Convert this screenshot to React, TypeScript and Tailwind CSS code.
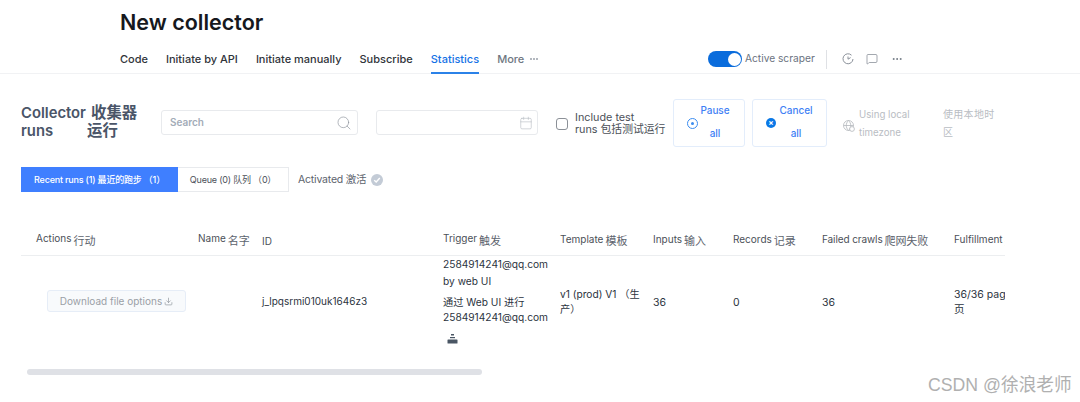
import { MessageSquare, MoreHorizontal, Search, Calendar, Download } from "lucide-react";

const cols = "grid grid-cols-[177px_64px_181px_117px_93px_80px_89px_132px_51px]";
const zh = "relative top-[3px] ml-[2px] text-[11px] text-[#5c636d]";
const zh2 = "relative top-[2px] ml-[2px] text-[11px] text-[#5c636d]";

function Tab({ children, active, muted }: { children: React.ReactNode; active?: boolean; muted?: boolean }) {
  return (
    <div className={`h-[31px] pt-[7px] border-b-2 text-[11px] leading-[18px] font-medium ${active ? "border-[#2b82e8] text-[#1672e6]" : "border-transparent"} ${muted ? "text-[#6f7782]" : active ? "" : "text-[#30343a]"}`}>
      {children}
    </div>
  );
}

export default function App() {
  return (
    <div className="relative w-[1080px] h-[402px] overflow-hidden bg-white font-['Inter','Noto_Sans_CJK_SC',sans-serif] text-[#242a33]">
      <header className="h-[74px] border-b border-[#f1f2f4] pl-[120px] pr-[177px]">
        <h1 className="pt-[8px] h-[43px] text-[21.5px] leading-[28px] font-semibold text-[#16181d]">New collector</h1>
        <div className="flex items-start">
          <nav className="flex gap-[18px]">
            <Tab>Code</Tab>
            <Tab>Initiate by API</Tab>
            <Tab>Initiate manually</Tab>
            <Tab>Subscribe</Tab>
            <Tab active>Statistics</Tab>
            <div className="flex">
              <Tab muted>More</Tab>
              <span className="ml-[6px] mt-[15px] flex gap-[1px]">
                <i className="w-[2px] h-[2px] rounded-full bg-[#9aa1aa]" />
                <i className="w-[2px] h-[2px] rounded-full bg-[#9aa1aa]" />
                <i className="w-[2px] h-[2px] rounded-full bg-[#9aa1aa]" />
              </span>
            </div>
          </nav>
          <div className="ml-auto flex items-center h-[20px] mt-[6px]">
            <div className="w-[34px] h-[16px] rounded-full bg-[#0a6cdc] flex justify-end items-center pr-[1px]">
              <div className="w-[13px] h-[13px] rounded-full bg-white" />
            </div>
            <span className="ml-[3px] w-[69px] whitespace-nowrap text-[10.2px] text-[#6b7280]">Active scraper</span>
            <div className="ml-[12px] w-px h-[19px] bg-[#dfe1e5]" />
            <svg className="ml-[15px]" width="12" height="12" viewBox="0 0 12 12" fill="none" stroke="#8a9099" strokeWidth="1">
              <path d="M9.5 2.2A5 5 0 1 0 11 6" />
              <path d="M6 3.5V6.2L8.6 4.6" />
            </svg>
            <MessageSquare className="ml-[12px] text-[#7b828c]" size={12} strokeWidth={1.4} />
            <MoreHorizontal className="ml-[13px] text-[#6f7782]" size={12} strokeWidth={2} />
          </div>
        </div>
      </header>

      <section className="flex items-start pl-[21px] pt-[25px] h-[93px]">
        <h2 className="w-[140px] mt-[5px] grid grid-cols-[66px_1fr] text-[14.8px] leading-[18px] font-semibold text-[#4a5568]">
          <span>Collector</span><span className="pl-[4px] text-[15.4px]">收集器</span>
          <span>runs</span><span className="text-[15.4px]">运行</span>
        </h2>
        <div className="w-[197px] h-[25px] mt-[11px] border border-[#e8eaed] rounded-[3px] flex items-center pl-[8px] pr-[5px]">
          <span className="text-[10px] font-semibold text-[#a3acb8]">Search</span>
          <Search className="ml-auto text-[#8c939c]" size={16} strokeWidth={1} />
        </div>
        <div className="ml-[18px] w-[162px] h-[25px] mt-[11px] border border-[#e8eaed] rounded-[3px] flex items-center justify-end pr-[4px]">
          <Calendar className="text-[#b4b9c0]" size={14} strokeWidth={1} />
        </div>
        <div className="ml-[18px] mt-[13px] flex items-center">
          <div className="w-[12px] h-[12px] border border-[#8b9097] rounded-[3px]" />
          <div className="ml-[7px] text-[10.8px] leading-[12px] text-[#4b5058] w-[90px] whitespace-nowrap">Include test<br />runs 包括测试运行</div>
        </div>
        <button className="ml-[8px] w-[72px] h-[48px] border border-[#e3edfb] rounded-[3px] flex items-center pl-[13px]">
          <span className="w-[11px] h-[11px] rounded-full border border-[#3b8cf0] flex items-center justify-center shrink-0">
            <i className="w-[3px] h-[3px] rounded-full bg-[#3b8cf0]" />
          </span>
          <span className="w-[34px] -mt-[2px] text-center text-[10px] tracking-[-0.1px] leading-[23px] font-medium text-[#3f7ff5]">Pause<br />all</span>
        </button>
        <button className="ml-[7px] w-[75px] h-[48px] border border-[#e3edfb] rounded-[3px] flex items-center pl-[13px]">
          <span className="w-[10px] h-[10px] rounded-full bg-[#0a78e6] flex items-center justify-center shrink-0 text-white text-[8px] leading-none font-bold">×</span>
          <span className="w-[40px] -mt-[2px] text-center text-[10px] leading-[23px] font-medium text-[#3f7ff5]">Cancel<br />all</span>
        </button>
        <svg className="ml-[16px] mt-[21px]" width="12" height="12" viewBox="0 0 12 12" fill="none" stroke="#b4b8bd" strokeWidth="0.8">
          <circle cx="5.5" cy="5.5" r="5" />
          <path d="M0.5 5.5h10M5.5 .5c-3 3-3 7 0 10M5.5 .5c3 3 3 7 0 10" />
          <circle cx="9" cy="9" r="2.4" fill="#fff" />
        </svg>
        <div className="ml-[4px] mt-[7px] w-[84px] text-[9.7px] leading-[18px] text-[#b9bdc3]">Using local timezone</div>
        <div className="mt-[6px] w-[60px] text-[10px] leading-[18px] text-[#b9bdc3] tracking-[0.3px]">使用本地时区</div>
      </section>

      <div className="flex items-center pl-[21px] h-[25px]">
        <div className="w-[157px] h-[25px] bg-[#3f7fff] flex items-center justify-center text-[9px] tracking-[-0.2px] font-medium text-white whitespace-pre">Recent runs (1) 最近的跑步 （1）</div>
        <div className="w-[111px] h-[25px] border border-[#e8eaed] border-l-0 flex items-center justify-center text-[9px] tracking-[-0.2px] text-[#4b5058] whitespace-pre">Queue (0) 队列 （0）</div>
        <span className="ml-[9px] mt-[1px] text-[10.5px] tracking-[-0.2px] text-[#5c636d]">Activated 激活</span>
        <span className="ml-[5px] mt-[1px] w-[12px] h-[12px] rounded-full bg-[#c3cbd6] flex items-center justify-center">
          <svg width="8" height="8" viewBox="0 0 8 8" fill="none" stroke="#fff" strokeWidth="1.4"><path d="M1.2 4.2L3.2 6L6.8 2" /></svg>
        </span>
      </div>

      <div className="ml-[21px] mt-[33px] w-[984px] overflow-hidden">
        <div className={`${cols} h-[31px] border-b border-[#eceef0] pt-[5px] text-[10px] text-[#4b5058] whitespace-nowrap`}>
          <div className="pl-[15px]">Actions<span className={zh}>行动</span></div>
          <div>Name<span className={zh}>名字</span></div>
          <div className="pt-[4px]">ID</div>
          <div>Trigger<span className={zh}>触发</span></div>
          <div className="pt-[1px]">Template<span className={zh2}>模板</span></div>
          <div className="pt-[1px]">Inputs<span className={zh2}>输入</span></div>
          <div className="pt-[1px]">Records<span className={zh2}>记录</span></div>
          <div className="pt-[1px] tracking-[-0.1px]">Failed crawls<span className={zh2}>爬网失败</span></div>
          <div className="pt-[1px] overflow-hidden">Fulfillment<span className={zh2}>完成</span></div>
        </div>
        <div className={`${cols} h-[96px] text-[10.2px] text-[#2b3340] items-start`}>
          <div className="pl-[26px] pt-[34px]">
            <div className="w-[139px] h-[22px] bg-[#f8fafc] border border-[#e6edf7] rounded-[3px] flex items-center justify-center text-[10px] text-[#9a9fa6]">
              Download file options
              <Download className="ml-[2px]" size={9} />
            </div>
          </div>
          <div />
          <div className="pt-[38px] text-[10px] whitespace-nowrap">j_lpqsrmi010uk1646z3</div>
          <div className="whitespace-nowrap pt-[1px] leading-[15px]">
            <div>2584914241@qq.com</div>
            <div className="mt-[2px]">by web UI</div>
            <div className="mt-[6px]">通过 Web UI 进行</div>
            <div>2584914241@qq.com</div>
            <svg className="ml-[4px] mt-[9px]" width="11" height="10" viewBox="0 0 11 10" fill="#4a5664">
              <rect x="4" y="0" width="3" height="1.5" />
              <rect x="3" y="3" width="5" height="1.2" />
              <rect x="0.5" y="5.5" width="10" height="4" rx="0.6" />
            </svg>
          </div>
          <div className="pt-[31px] leading-[15px] pr-[5px]">v1 (prod) V1 （生产）</div>
          <div className="pt-[39px] text-[10.5px]">36</div>
          <div className="pt-[39px] text-[10.5px]">0</div>
          <div className="pt-[39px] text-[10.5px]">36</div>
          <div className="pt-[31px] leading-[15px] text-[10.5px] whitespace-nowrap overflow-hidden">36/36 pages<br />页</div>
        </div>
      </div>

      <div className="ml-[27px] mt-[17px] w-[455px] h-[6px] rounded-full bg-[#dfe1e6]" />

      <div className="absolute left-[928px] top-[375px] text-[17.7px] leading-[20px] text-[#b0b0b0] whitespace-nowrap font-['Liberation_Sans','Noto_Sans_CJK_SC',sans-serif]">CSDN @徐浪老师</div>
    </div>
  );
}
